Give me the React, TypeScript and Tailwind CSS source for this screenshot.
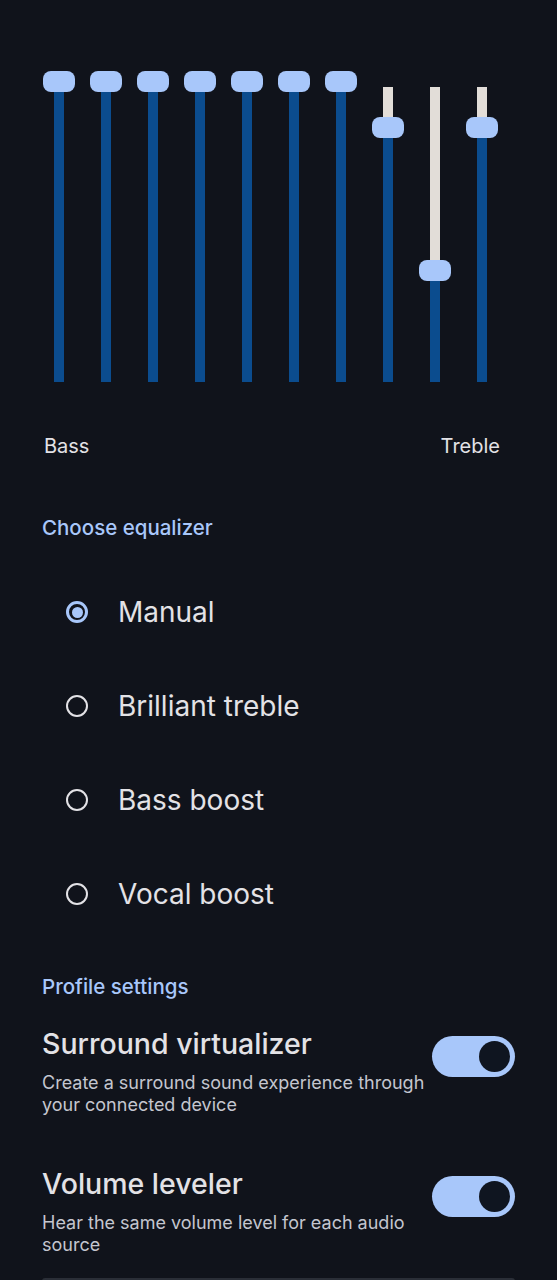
import React from 'react';

// thumb centre (px from top of page) for each band; 81 = pinned at the top
const bands = [81, 81, 81, 81, 81, 81, 81, 127, 270, 127];

const TRACK_TOP = 87;
const TRACK_H = 295;

const Slider: React.FC<{ center: number }> = ({ center }) => {
  const gray = Math.max(center - TRACK_TOP, 0);
  return (
    <div className="w-[47px] flex justify-center">
      <div className="relative w-[10px] h-[295px] flex flex-col">
        <div className="w-full bg-[#e2ddd8]" style={{ height: gray }}></div>
        <div className="w-full flex-1 bg-[#0b4c8e]"></div>
        <div
          className="absolute left-1/2 -translate-x-1/2 w-[32px] h-[21px] rounded-[8px] bg-[#a8c7fa]"
          style={{ top: center - TRACK_TOP - 10.5 }}
        ></div>
      </div>
    </div>
  );
};

const Radio: React.FC<{ label: string; checked?: boolean }> = ({ label, checked }) => (
  <div className="h-[94px] flex items-center pl-[66px]">
    {checked ? (
      <div className="w-[22px] h-[22px] rounded-full border-[3px] border-[#a8c7fa] flex items-center justify-center">
        <div className="w-[11px] h-[11px] rounded-full bg-[#a8c7fa]"></div>
      </div>
    ) : (
      <div className="w-[22px] h-[22px] rounded-full border-[2.5px] border-[#e3e2e6]"></div>
    )}
    <span className="ml-[30px] text-[28px] leading-[34px] text-[#e3e2e6]">{label}</span>
  </div>
);

const Toggle: React.FC = () => (
  <div className="w-[83px] h-[41px] rounded-full bg-[#a8c7fa] flex items-center justify-end pr-[5px] shrink-0">
    <div className="w-[31px] h-[31px] rounded-full bg-[#0f1520]"></div>
  </div>
);

const Setting: React.FC<{ title: string; sub: string; className?: string }> = ({ title, sub, className }) => (
  <div className={`flex justify-between pl-[42px] pr-[42px] ${className ?? ''}`}>
    <div className="w-[388px]">
      <div className="text-[28.5px] leading-[34px] font-medium text-[#e3e2e6]">{title}</div>
      <div className="mt-[11px] text-[18px] leading-[22px] text-[#c4c6cf]">{sub}</div>
    </div>
    <div className="mt-[9px]">
      <Toggle />
    </div>
  </div>
);

export default function App() {
  return (
    <div className="w-[557px] h-[1280px] overflow-hidden bg-[#10131b]" style={{ fontFamily: 'Inter, "Noto Sans", sans-serif' }}>
      <div className="mt-[87px] flex px-[35px]" style={{ height: TRACK_H }}>
        {bands.map((c, i) => (
          <Slider key={i} center={c} />
        ))}
      </div>

      <div className="mt-[52px] flex justify-between pl-[44px] pr-[57px] text-[20px] leading-[24px] text-[#e3e2e6]">
        <span>Bass</span>
        <span>Treble</span>
      </div>

      <div className="mt-[58px] pl-[42px] text-[20.5px] leading-[24px] font-medium text-[#a8c7fa]">Choose equalizer</div>

      <div className="mt-[25px]">
        <Radio label="Manual" checked />
        <Radio label="Brilliant treble" />
        <Radio label="Bass boost" />
        <Radio label="Vocal boost" />
      </div>

      <div className="mt-[34px] pl-[42px] text-[20.5px] leading-[24px] font-medium text-[#a8c7fa]">Profile settings</div>

      <Setting
        className="mt-[28px]"
        title="Surround virtualizer"
        sub="Create a surround sound experience through your connected device"
      />
      <Setting
        className="mt-[51px]"
        title="Volume leveler"
        sub="Hear the same volume level for each audio source"
      />

      <div className="mt-[22px] mx-[42px] h-[3px] rounded-t-[3px] bg-[#2a2e37]"></div>
    </div>
  );
}
